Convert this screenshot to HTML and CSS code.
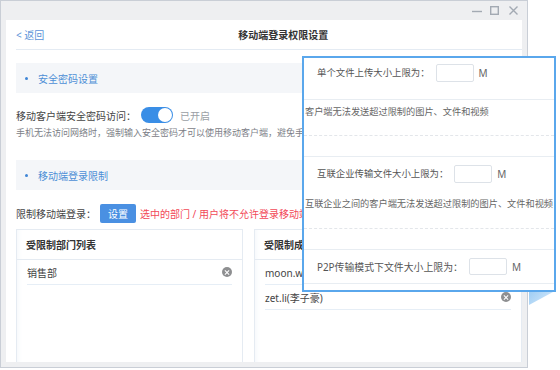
FILE: index.html
```html
<!DOCTYPE html>
<html>
<head>
    <meta charset="utf-8">
    <link rel="stylesheet" href="styles.css">
</head>
<body>
    <div class="window">
        <div class="titlebar">
            <svg class="win-btn" width="10" height="10" viewBox="0 0 10 10"><path d="M0 5.5h10" stroke="#a3aab3" stroke-width="1.4"/></svg>
            <svg class="win-btn" width="9" height="9" viewBox="0 0 9 9"><rect x="0.7" y="0.7" width="7.6" height="7.6" fill="none" stroke="#a3aab3" stroke-width="1.4"/></svg>
            <svg class="win-btn close" width="9" height="9" viewBox="0 0 9 9"><path d="M0.5 0.5l8 8M8.5 0.5l-8 8" stroke="#a3aab3" stroke-width="1.4"/></svg>
        </div>
        <div class="frame">
            <div class="page">
                <div class="page-head">
                    <a class="back">&lt; 返回</a>
                    <h1 class="page-title">移动端登录权限设置</h1>
                </div>

                <div class="section-title"><i class="dot"></i>安全密码设置</div>
                <div class="form-row">
                    移动客户端安全密码访问：
                    <span class="switch"><span class="knob"></span></span>
                    <span class="switch-state">已开启</span>
                </div>
                <p class="desc">手机无法访问网络时，强制输入安全密码才可以使用移动客户端，避免手机丢失后泄露企业信息</p>

                <div class="section-title second"><i class="dot"></i>移动端登录限制</div>
                <div class="form-row login-row">
                    限制移动端登录：
                    <button class="btn">设置</button>
                    <span class="warn">选中的部门 / 用户将不允许登录移动端</span>
                </div>

                <div class="lists">
                    <div class="list-box">
                        <div class="list-head">受限制部门列表</div>
                        <ul class="list">
                            <li>销售部<i class="clear"></i></li>
                        </ul>
                    </div>
                    <div class="list-box">
                        <div class="list-head">受限制成员列表</div>
                        <ul class="list">
                            <li>moon.wu(吴月)<i class="clear"></i></li>
                            <li>zet.li(李子豪)<i class="clear"></i></li>
                        </ul>
                    </div>
                </div>
            </div>
        </div>
    </div>

    <!-- zoomed callout over the page -->
    <div class="callout">
        <div class="limit-row first">单个文件上传大小上限为：<span class="size-input"></span><span class="unit">M</span></div>
        <p class="limit-desc first">客户端无法发送超过限制的图片、文件和视频</p>
        <div class="limit-gap"></div>
        <div class="limit-row">互联企业传输文件大小上限为：<span class="size-input"></span><span class="unit">M</span></div>
        <p class="limit-desc">互联企业之间的客户端无法发送超过限制的图片、文件和视频</p>
        <div class="limit-gap"></div>
        <div class="limit-row last">P2P传输模式下文件大小上限为：<span class="size-input"></span><span class="unit">M</span></div>
    </div>
    <div class="fold"></div>
</body>
</html>
```

FILE: styles.css
```css
* {
    margin: 0;
    padding: 0;
    box-sizing: border-box;
}

body {
    width: 560px;
    height: 370px;
    position: relative;
    overflow: hidden;
    background: #fff;
    font-family: "Noto Sans", "Noto Sans CJK SC", sans-serif;
    font-size: 10px;
    color: #333;
}

.window {
    width: 528px;
    height: 368px;
    border: 1px solid #c9ced6;
    background: #eeeff1;
    display: flex;
    flex-direction: column;
}

.titlebar {
    height: 19px;
    flex: none;
    display: flex;
    justify-content: flex-end;
    align-items: center;
    gap: 8px;
    padding-right: 9px;
}

.titlebar .close {
    margin-left: 2px;
}

.frame {
    flex: 1;
    display: flex;
    padding: 0 5px 5px;
    min-height: 0;
}

.page {
    flex: 1;
    background: #fff;
    padding-left: 10px;
    display: flex;
    flex-direction: column;
    overflow: hidden;
    white-space: nowrap;
}

.page-head {
    height: 30px;
    flex: none;
    display: flex;
    align-items: center;
    border-bottom: 1px solid #e4ebf3;
}

.back {
    color: #5b93d8;
    line-height: 14px;
}

.page-title {
    font-size: 10px;
    font-weight: bold;
    color: #333;
    margin-left: 194px;
}

.section-title {
    height: 30px;
    flex: none;
    margin-top: 13px;
    padding-left: 9px;
    background: #f4f6f9;
    display: flex;
    align-items: center;
    gap: 10px;
    color: #4d8fd6;
}

.section-title.second {
    margin-top: 20px;
}

.dot {
    width: 3px;
    height: 3px;
    border-radius: 50%;
    background: #3f86d6;
}

.form-row {
    height: 22px;
    flex: none;
    margin-top: 11px;
    display: flex;
    align-items: center;
    color: #444;
}

.switch {
    width: 32px;
    height: 16px;
    margin-left: 5px;
    border-radius: 8px;
    background: #3a8ee6;
    position: relative;
}

.knob {
    position: absolute;
    right: 1px;
    top: 1px;
    width: 14px;
    height: 14px;
    border-radius: 50%;
    background: #fff;
}

.switch-state {
    margin-left: 7px;
    color: #9a9ea4;
}

.desc {
    font-size: 9px;
    line-height: 14px;
    color: #7c8087;
}

.login-row {
    margin-top: 12px;
}

.btn {
    width: 36px;
    height: 19px;
    margin-left: 4px;
    border: none;
    border-radius: 2px;
    background: #4a90e2;
    color: #fff;
    font: inherit;
}

.warn {
    margin-left: 4px;
    color: #f24957;
}

.lists {
    flex: 1;
    margin-top: 5px;
    display: grid;
    grid-template-columns: 227px 1fr;
    gap: 11px;
    min-height: 0;
}

.list-box {
    border: 1px solid #e5ebf2;
    border-bottom: none;
    box-shadow: inset 6px 0 6px -6px #eef3f8;
}

.list-head {
    height: 30px;
    padding-left: 9px;
    display: flex;
    align-items: center;
    font-weight: bold;
    color: #333;
    border-bottom: 1px solid #e5ebf2;
}

.list {
    list-style: none;
}

.list li {
    height: 25px;
    margin: 0 10px;
    display: flex;
    align-items: center;
    justify-content: space-between;
    border-bottom: 1px solid #e6eef6;
    color: #444;
}

.clear {
    width: 10px;
    height: 10px;
    border-radius: 50%;
    background: #8e8f91;
    position: relative;
}

.clear::before,
.clear::after {
    content: "";
    position: absolute;
    left: 2px;
    top: 4.5px;
    width: 6px;
    height: 1px;
    background: #fff;
    transform: rotate(45deg);
}

.clear::after {
    transform: rotate(-45deg);
}

/* callout */
.callout {
    position: absolute;
    left: 302px;
    top: 56px;
    width: 254px;
    height: 236px;
    border: 2px solid #5aa7ec;
    background: #fff;
    overflow: hidden;
    white-space: nowrap;
    font-size: 9.4px;
    color: #555;
}

.limit-row {
    height: 32px;
    padding: 8px 0 0 13px;
    display: flex;
    align-items: flex-start;
    line-height: 18px;
}

.limit-row.first {
    height: 42px;
    padding-top: 6px;
    border-bottom: 1px solid #e8edf2;
}

.limit-row.last {
    height: 34px;
    font-size: 9.9px;
    border-bottom: 1px solid #e8edf2;
}

.size-input {
    width: 38px;
    height: 18px;
    margin-left: 6px;
    border: 1px solid #dde2e8;
    border-radius: 2px;
    background: #fff;
}

.limit-row.last .size-input {
    height: 17px;
}

.unit {
    margin-left: 5px;
    font-size: 10px;
    color: #666;
}

.limit-desc {
    height: 40px;
    padding: 8px 0 0 1px;
    font-size: 9.2px;
    line-height: 14px;
    color: #666;
    border-bottom: 1px dashed #e3e6ea;
}

.limit-desc.first {
    height: 36px;
    padding-top: 5px;
}

.limit-gap {
    height: 21px;
    border-bottom: 1px solid #e8edf2;
}

.fold {
    position: absolute;
    left: 529px;
    top: 292px;
    width: 24px;
    height: 13px;
    background: linear-gradient(135deg, #9fcdf3, #d8ebfc);
    clip-path: polygon(0 0, 100% 0, 0 100%);
}
```
